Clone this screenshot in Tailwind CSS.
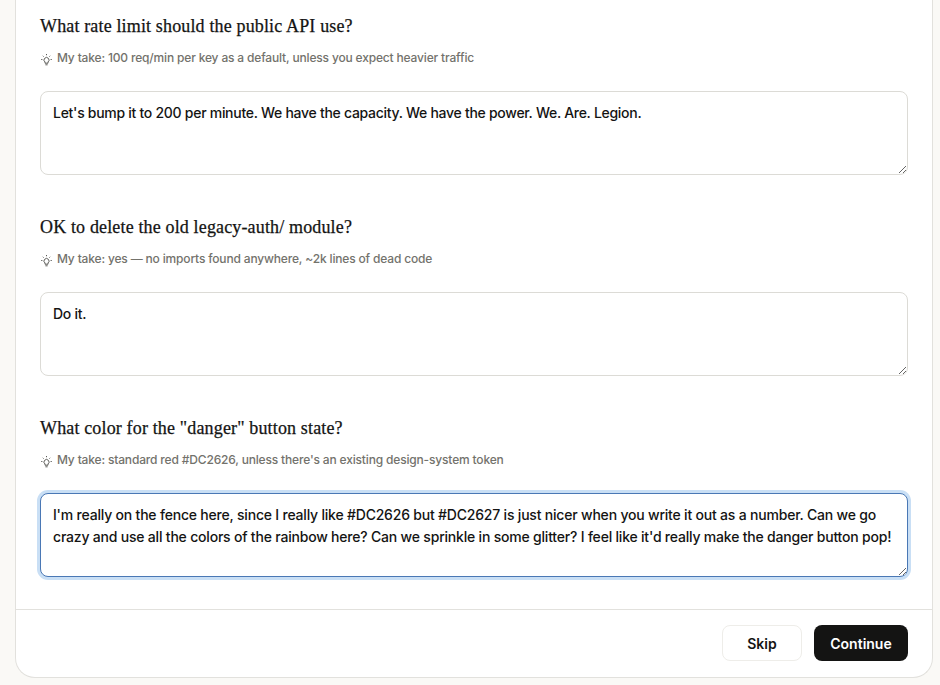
<!DOCTYPE html>
<html lang="en">
<head>
    <meta charset="UTF-8">
    <meta name="viewport" content="width=device-width, initial-scale=1.0">
    <title>Questions</title>
    <script src="https://cdn.jsdelivr.net/npm/@tailwindcss/browser@4"></script>
</head>
<body class="bg-[#faf9f6]">
    <div class="h-[685px] overflow-hidden flex flex-col justify-end pl-[15px] pr-[7px] pb-[7px]">
        <!-- Card, its top is scrolled off -->
        <div class="bg-white border border-[#e2e1dd] rounded-b-[20px] border-t-0 shrink-0">
            <div class="px-6 pt-[40px] flex flex-col gap-[40px] pb-8 font-['Inter',sans-serif]">
                <!-- Question 1 -->
                <section>
                    <h3 class="font-['Liberation_Serif',serif] text-[18px] leading-[24px] tracking-[0.15px] text-[#141413] [-webkit-text-stroke:0.25px_#141413]">What rate limit should the public API use?</h3>
                    <p class="mt-[12px] flex items-center gap-[4px] text-[12px] leading-[16px] tracking-[-0.165px] font-medium text-[#73726c]">
                        <svg class="w-[13px] h-[13px] shrink-0 mt-[2px]" viewBox="0 0 13 13" fill="none" stroke="#4a4a45" stroke-width="0.9"><path d="M5 9a2.5 2.5 0 1 1 3 0V10.2H5zM5.4 11.8h2.2M6.5 1v1.2M1.2 6.5h1.2M10.6 6.5h1.2M2.8 2.8l.8.8M10.2 2.8l-.8.8"/></svg>
                        My take: 100 req/min per key as a default, unless you expect heavier traffic
                    </p>
                    <textarea class="mt-[25px] block w-full h-[84px] px-3 py-[10px] bg-white border border-[#dcdbd6] rounded-lg text-[14px] font-medium leading-[22px] tracking-[-0.28px] text-[#141413] outline-none">Let's bump it to 200 per minute. We have the capacity. We have the power. We. Are. Legion.</textarea>
                </section>
                <!-- Question 2 -->
                <section>
                    <h3 class="font-['Liberation_Serif',serif] text-[18px] leading-[24px] tracking-[0.15px] text-[#141413] [-webkit-text-stroke:0.25px_#141413]">OK to delete the old legacy-auth/ module?</h3>
                    <p class="mt-[12px] flex items-center gap-[4px] text-[12px] leading-[16px] tracking-[-0.165px] font-medium text-[#73726c]">
                        <svg class="w-[13px] h-[13px] shrink-0 mt-[2px]" viewBox="0 0 13 13" fill="none" stroke="#4a4a45" stroke-width="0.9"><path d="M5 9a2.5 2.5 0 1 1 3 0V10.2H5zM5.4 11.8h2.2M6.5 1v1.2M1.2 6.5h1.2M10.6 6.5h1.2M2.8 2.8l.8.8M10.2 2.8l-.8.8"/></svg>
                        My take: yes — no imports found anywhere, ~2k lines of dead code
                    </p>
                    <textarea class="mt-[25px] block w-full h-[84px] px-3 py-[10px] bg-white border border-[#dcdbd6] rounded-lg text-[14px] font-medium leading-[22px] tracking-[-0.25px] text-[#141413] outline-none">Do it.</textarea>
                </section>
                <!-- Question 3 -->
                <section>
                    <h3 class="font-['Liberation_Serif',serif] text-[18px] leading-[24px] tracking-[0.15px] text-[#141413] [-webkit-text-stroke:0.25px_#141413]">What color for the "danger" button state?</h3>
                    <p class="mt-[12px] flex items-center gap-[4px] text-[12px] leading-[16px] tracking-[-0.165px] font-medium text-[#73726c]">
                        <svg class="w-[13px] h-[13px] shrink-0 mt-[2px]" viewBox="0 0 13 13" fill="none" stroke="#4a4a45" stroke-width="0.9"><path d="M5 9a2.5 2.5 0 1 1 3 0V10.2H5zM5.4 11.8h2.2M6.5 1v1.2M1.2 6.5h1.2M10.6 6.5h1.2M2.8 2.8l.8.8M10.2 2.8l-.8.8"/></svg>
                        My take: standard red #DC2626, unless there's an existing design-system token
                    </p>
                    <textarea class="mt-[25px] block w-full h-[84px] px-3 py-[10px] bg-white border border-[#4a78b5] ring-[3px] ring-[#c9dff5] rounded-lg text-[14px] font-medium leading-[22px] tracking-[-0.2px] text-[#141413] outline-none">I'm really on the fence here, since I really like #DC2626 but #DC2627 is just nicer when you write it out as a number. Can we go crazy and use all the colors of the rainbow here? Can we sprinkle in some glitter? I feel like it'd really make the danger button pop!</textarea>
                </section>
            </div>
            <!-- Footer -->
            <div class="border-t border-[#e2e1dd] h-[68px] px-6 pt-[15px] flex items-start justify-end gap-3 font-['Inter',sans-serif]">
                <button class="h-9 w-20 bg-white border border-[#eeede9] rounded-lg text-[14px] font-semibold text-[#141413]">Skip</button>
                <button class="h-9 w-[94px] bg-[#141413] rounded-lg text-[14px] font-semibold text-white">Continue</button>
            </div>
        </div>
    </div>
</body>
</html>
